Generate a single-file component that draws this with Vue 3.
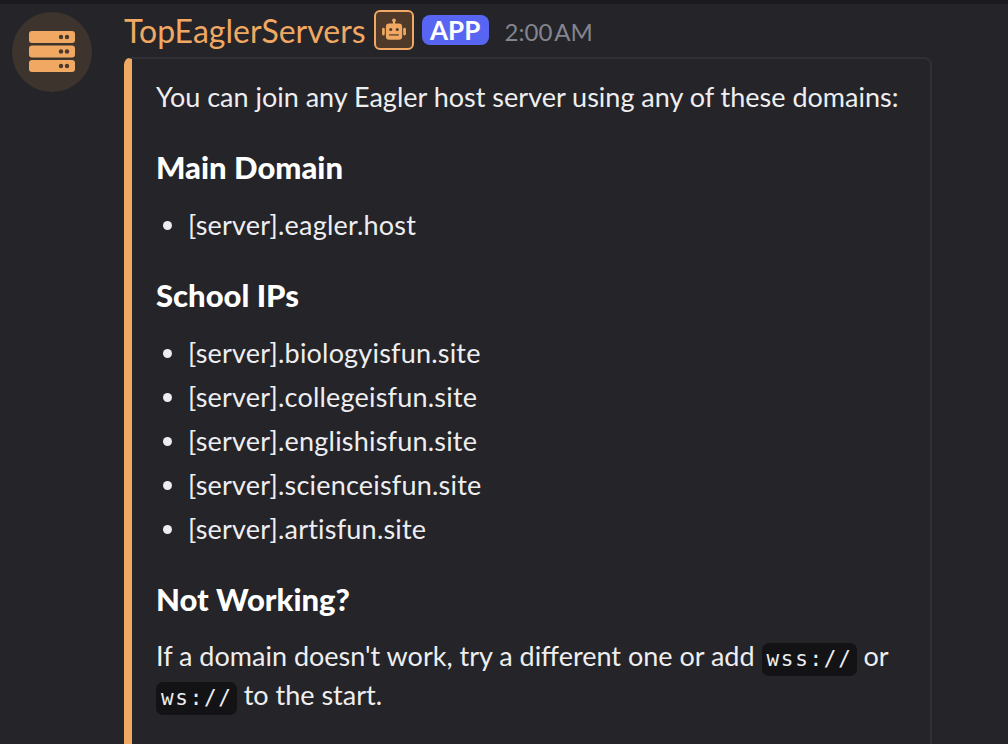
<template>
  <div class="page">
    <div class="top-strip"></div>
    <div class="message">
      <div class="avatar">
        <svg width="48" height="42" viewBox="0 0 48 42">
          <g v-for="y in [0, 14.5, 29]" :key="y">
            <rect x="1" :y="y" width="46" height="12" rx="3" fill="#f0a863" />
            <circle cx="33" :cy="y + 6" r="2.2" fill="#4a3a2c" />
            <circle cx="39" :cy="y + 6" r="2.2" fill="#4a3a2c" />
          </g>
        </svg>
      </div>
      <div class="content">
        <div class="header">
          <span class="name">TopEaglerServers</span>
          <span class="bot-icon">
            <svg width="26" height="26" viewBox="0 0 24 24" fill="#f0a863">
              <circle cx="12" cy="3" r="1.7" />
              <rect x="11" y="3" width="2" height="4" />
              <rect x="4.5" y="6" width="15" height="15" rx="3" />
              <rect x="1" y="10" width="2.5" height="7" rx="1.2" />
              <rect x="20.5" y="10" width="2.5" height="7" rx="1.2" />
              <circle cx="9" cy="11.5" r="1.4" fill="#4f3a2a" />
              <circle cx="15" cy="11.5" r="1.4" fill="#4f3a2a" />
              <rect x="7.5" y="16" width="9" height="1.1" fill="#4f3a2a" />
            </svg>
          </span>
          <span class="app-tag">APP</span>
          <span class="time">2:00 AM</span>
        </div>
        <div class="embed">
          <p class="intro">You can join any Eagler host server using any of these domains:</p>
          <h3>Main Domain</h3>
          <ul>
            <li>[server].eagler.host</li>
          </ul>
          <h3>School IPs</h3>
          <ul>
            <li v-for="d in schoolDomains" :key="d">[server].{{ d }}</li>
          </ul>
          <h3>Not Working?</h3>
          <p class="note">If a domain doesn't work, try a different one or add <code>wss://</code> or <code>ws://</code> to the start.</p>
        </div>
      </div>
    </div>
  </div>
</template>

<script setup>
const schoolDomains = [
  'biologyisfun.site',
  'collegeisfun.site',
  'englishisfun.site',
  'scienceisfun.site',
  'artisfun.site'
]
</script>

<style>
html, body {
  margin: 0;
  background: #242429;
  overflow: hidden;
}
</style>

<style scoped>
.page {
  height: 744px;
  overflow: hidden;
  background: #242429;
  font-family: "Lato", "Noto Sans", sans-serif;
  color: #eeeef0;
}

.top-strip {
  height: 4px;
  background: #1b1b1f;
}

.message {
  display: flex;
  gap: 32px;
  padding: 8px 0 0 12px;
}

.avatar {
  flex: none;
  width: 80px;
  height: 80px;
  border-radius: 50%;
  background: #3d342d;
  display: flex;
  align-items: center;
  justify-content: center;
}

.content {
  width: 808px;
}

.header {
  display: flex;
  align-items: center;
  height: 40px;
  margin-top: -2px;
  margin-bottom: 7px;
}

.name {
  font-size: 32px;
  color: #f0a863;
}

.bot-icon {
  box-sizing: border-box;
  width: 40px;
  height: 40px;
  margin-left: 8px;
  border: 2px solid #f0a863;
  border-radius: 6px;
  background: #4f3a2a;
  display: flex;
  align-items: center;
  justify-content: center;
}

.app-tag {
  margin-left: 8px;
  width: 67px;
  height: 30px;
  border-radius: 8px;
  background: #5865f2;
  color: #fff;
  font-size: 26px;
  font-weight: 700;
  display: flex;
  align-items: center;
  justify-content: center;
}

.time {
  margin-left: 16px;
  margin-top: 2px;
  font-size: 24px;
  word-spacing: -3.5px;
  color: #84848e;
}

.embed {
  box-sizing: border-box;
  border: 2px solid #303036;
  border-left: 8px solid #f0a863;
  border-radius: 8px;
  padding: 20px 24px 32px 24px;
  height: 720px;
  font-size: 27px;
  line-height: 36px;
}

.intro,
.note {
  margin: 0;
}

.intro {
  white-space: nowrap;
}

.note {
  margin-top: 19px;
}

h3 {
  margin: 28px 0 0;
  font-size: 31px;
  line-height: 40px;
  font-weight: 900;
  color: #fff;
}

.intro + h3 {
  margin-top: 32px;
}

ul {
  margin: 16px 0 0;
  padding-left: 32px;
}

li {
  height: 44px;
  line-height: 43px;
  letter-spacing: 0.2px;
}

code {
  font-family: "DejaVu Sans Mono", "Liberation Mono", monospace;
  font-size: 21px;
  letter-spacing: 1.7px;
  background: #131316;
  border-radius: 7px;
  padding: 4px 4px 5px 5px;
}
</style>
